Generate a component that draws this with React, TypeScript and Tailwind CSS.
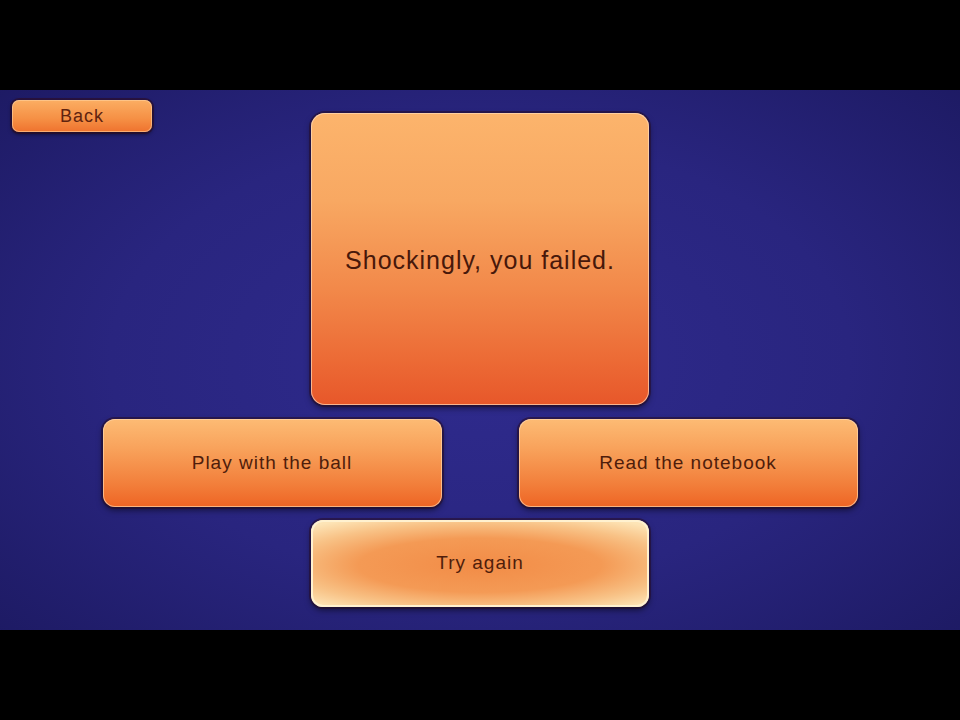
export default function App() {
  const font = { fontFamily: '"Liberation Sans", Arial, sans-serif' };
  const btn =
    "flex items-center justify-center rounded-[12px] bg-[linear-gradient(180deg,#fdbb74_0%,#f8a15a_35%,#f27e3a_75%,#ee6424_100%)] shadow-[inset_0_0_0_1px_rgba(255,214,170,0.7),0_0_0_2px_rgba(40,12,40,0.55),0_3px_6px_rgba(0,0,0,0.55)] text-[19px] tracking-[1px] text-[#4f1d0b]";

  return (
    <div className="w-[960px] h-[720px] bg-black flex flex-col" style={font}>
      <div className="h-[90px] shrink-0" />
      <div className="h-[540px] shrink-0 bg-[radial-gradient(ellipse_70%_75%_at_50%_50%,#2f2b8e_0%,#29257f_55%,#1d1a63_100%)] flex flex-col">
        <div className="grid grid-cols-[1fr_338px_1fr] pt-[10px]">
          <div className="pl-[12px]">
            <button className="w-[140px] h-[32px] rounded-[7px] bg-[linear-gradient(180deg,#fbae63_0%,#f58f44_60%,#ef722e_100%)] shadow-[inset_0_0_0_1px_rgba(255,210,160,0.6),0_0_0_2px_rgba(45,12,35,0.6),0_2px_4px_rgba(0,0,0,0.6)] text-[18px] tracking-[1px] text-[#5f230f] flex items-center justify-center">
              Back
            </button>
          </div>
          <div className="mt-[13px] h-[292px] rounded-[14px] bg-[linear-gradient(180deg,#fcb46c_0%,#f8a862_30%,#f2894a_60%,#ec6a35_85%,#e7572a_100%)] shadow-[inset_0_0_0_1px_rgba(255,220,185,0.7),0_0_0_2px_rgba(40,12,40,0.55),0_3px_6px_rgba(0,0,0,0.55)] flex items-center justify-center pt-[4px]">
            <span className="text-[25px] text-[#47180a] tracking-[1px]">Shockingly, you failed.</span>
          </div>
          <div />
        </div>
        <div className="flex justify-center gap-[77px] mt-[14px]">
          <div className={`${btn} w-[339px] h-[88px]`}>Play with the ball</div>
          <div className={`${btn} w-[339px] h-[88px]`}>Read the notebook</div>
        </div>
        <div className="flex justify-center mt-[13px]">
          <div className="w-[338px] h-[87px] rounded-[12px] bg-[radial-gradient(ellipse_72%_62%_at_50%_52%,#f28c47_0%,#f49a55_50%,#f8c286_78%,#fde4b6_100%)] shadow-[inset_0_0_0_2px_#fff1cf,0_0_0_2px_rgba(40,12,40,0.55),0_3px_6px_rgba(0,0,0,0.55)] flex items-center justify-center text-[19px] tracking-[1px] text-[#4f1d0b]">
            Try again
          </div>
        </div>
      </div>
      <div className="flex-1" />
    </div>
  );
}
